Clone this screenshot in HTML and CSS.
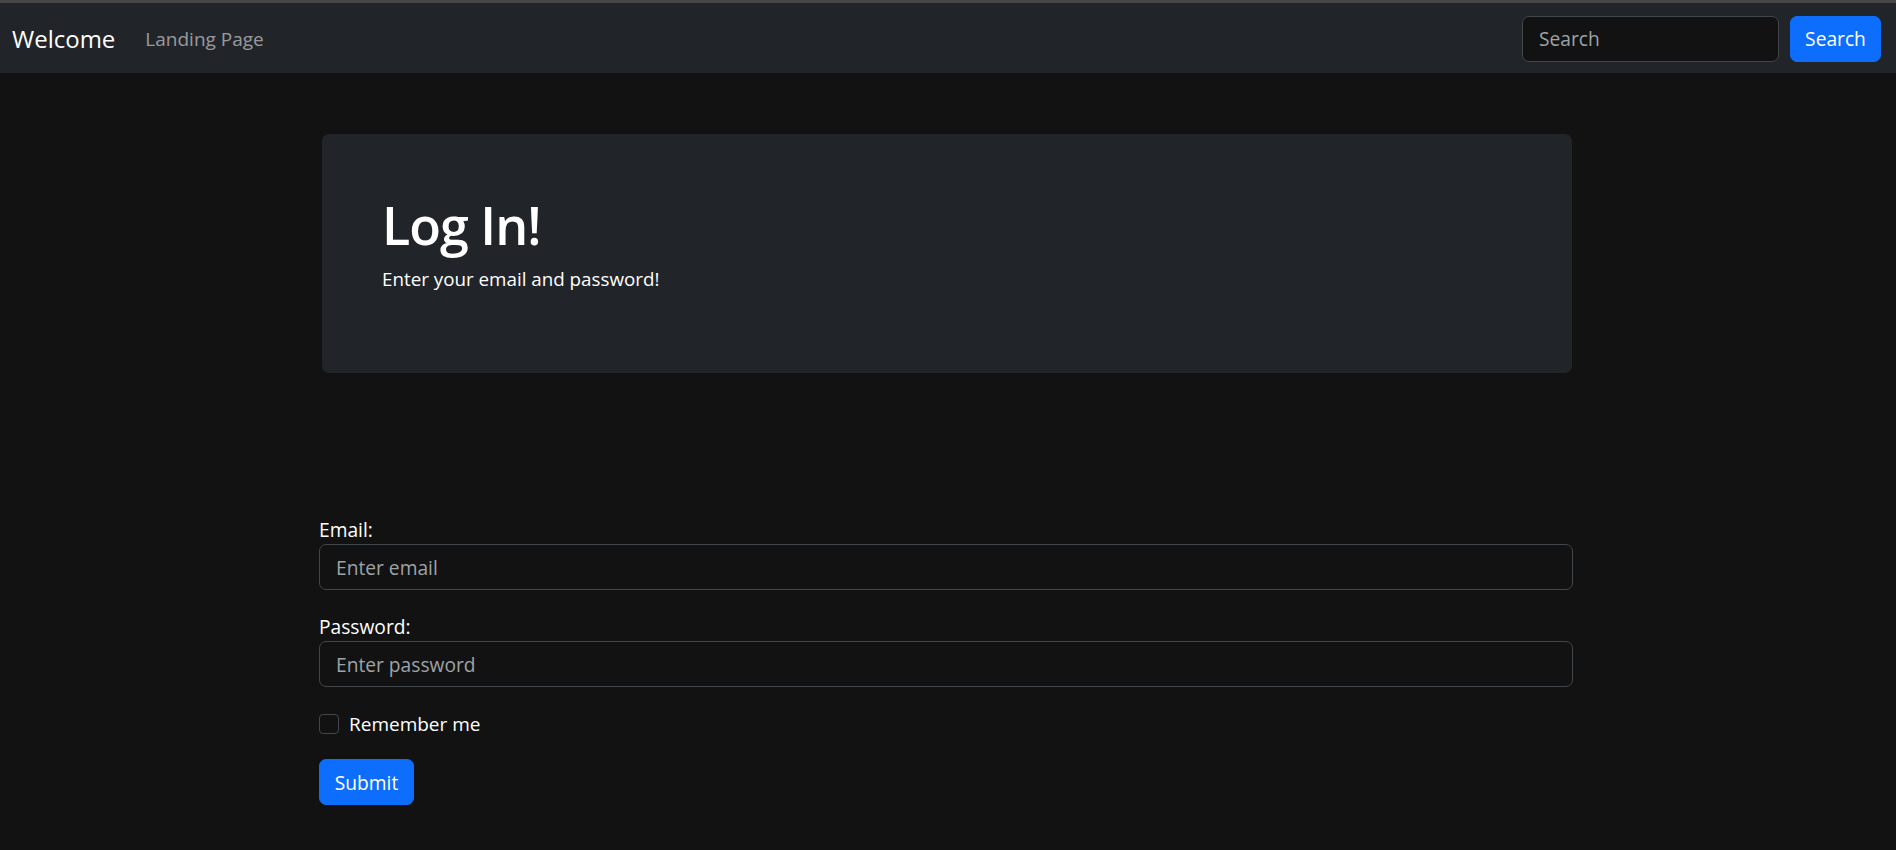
FILE: index.html
```html
<!DOCTYPE html>
<html lang="en">
<head>
<meta charset="utf-8">
<title>Log In</title>
<link rel="stylesheet" href="styles.css">
</head>
<body>
<nav class="navbar">
  <a class="brand" href="#">Welcome</a>
  <a class="nav-link" href="#">Landing Page</a>
  <form class="search">
    <input class="search-input" type="text" placeholder="Search">
    <button class="btn-primary search-btn" type="button">Search</button>
  </form>
</nav>
<main class="main">
  <section class="jumbo">
    <h1 class="title">Log In!</h1>
    <p class="lead">Enter your email and password!</p>
  </section>
  <form class="login">
    <div class="field">
      <label class="label" for="email">Email:</label>
      <input class="control" id="email" type="email" placeholder="Enter email">
    </div>
    <div class="field">
      <label class="label" for="pwd">Password:</label>
      <input class="control" id="pwd" type="password" placeholder="Enter password">
    </div>
    <div class="check">
      <span class="box"></span>
      <span class="check-label">Remember me</span>
    </div>
    <button class="btn-primary submit" type="button">Submit</button>
  </form>
</main>
</body>
</html>
```
FILE: styles.css
```css
* { box-sizing: border-box; }
html, body { margin: 0; padding: 0; }
body {
  background: #121212;
  color: #dee2e6;
  font-family: "Open Sans", "Noto Sans", sans-serif;
  font-size: 19.2px;
  height: 850px;
  overflow: hidden;
}
.navbar {
  border-top: 3px solid #474747;
  height: 73px;
  background: #212529;
  display: flex;
  align-items: center;
  padding: 1px 15px 0 12px;
}
.brand {
  color: #fff;
  text-decoration: none;
  font-size: 24px;
  margin-right: 30px;
}
.nav-link {
  color: rgba(255,255,255,.55);
  text-decoration: none;
  font-size: 19px;
}
.search {
  margin: 0 0 0 auto;
  display: flex;
  gap: 11px;
}
.search-input {
  width: 257px;
  height: 46px;
  background: #121212;
  border: 1px solid #41464b;
  border-radius: 7px;
  padding: 0 16px;
  color: #dee2e6;
  font: inherit;
  font-size: 19.2px;
}
.search-input::placeholder, .control::placeholder { color: #9ea3a8; }
.btn-primary {
  background: #0d6efd;
  border: 1px solid #0d6efd;
  color: #fff;
  border-radius: 7px;
  height: 46px;
  font: inherit;
  font-size: 19.2px;
  padding: 0 12px;
}
.search-btn { width: 91px; }
.main {
  width: 1254px;
  margin-left: 319px;
}
.jumbo {
  margin: 61px 1px 0 3px;
  height: 239px;
  background: #212529;
  border-radius: 7px;
  padding: 60px 60px 0;
}
.title {
  margin: 0;
  color: #fff;
  font-size: 52px;
  font-weight: 600;
  letter-spacing: -1px;
  line-height: 1.2;
}
.lead {
  margin: 9px 0 0;
  color: #fff;
  font-size: 18.8px;
  line-height: 1.5;
}
.login {
  margin-top: 142px;
}
.field { margin-bottom: 22px; }
.label {
  display: block;
  line-height: 29px;
  color: #fff;
}
.control {
  display: block;
  width: 100%;
  height: 46px;
  background: #121212;
  border: 1px solid #41464b;
  border-radius: 7px;
  padding: 0 16px;
  color: #dee2e6;
  font: inherit;
  font-size: 19.2px;
}
.check {
  display: flex;
  align-items: center;
  gap: 10px;
  height: 29px;
  margin-top: 21px;
}
.box {
  width: 20px;
  height: 20px;
  border: 1px solid #41464b;
  border-radius: 4px;
  background: #121212;
}
.check-label { color: #fff; font-size: 19px; }
.submit {
  margin-top: 21px;
  width: 95px;
}
```
